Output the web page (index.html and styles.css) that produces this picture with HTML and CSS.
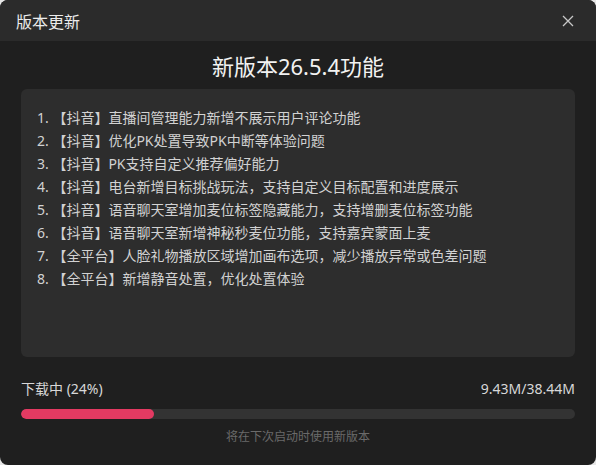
FILE: index.html
```html
<!DOCTYPE html>
<html lang="zh">
<head>
<meta charset="utf-8">
<link rel="stylesheet" href="styles.css">
</head>
<body>
<div class="window">
  <div class="titlebar">
    <span class="title">版本更新</span>
    <svg class="close" width="12" height="12" viewBox="0 0 12 12"><path d="M1 1L11 11M11 1L1 11" stroke="#c8c8c8" stroke-width="1.3" fill="none"/></svg>
  </div>
  <div class="main">
    <h1 class="heading">新版本26.5.4功能</h1>
    <div class="notes">
      <div class="item">1. 【抖音】直播间管理能力新增不展示用户评论功能</div>
      <div class="item">2. 【抖音】优化PK处置导致PK中断等体验问题</div>
      <div class="item">3. 【抖音】PK支持自定义推荐偏好能力</div>
      <div class="item">4. 【抖音】电台新增目标挑战玩法，支持自定义目标配置和进度展示</div>
      <div class="item">5. 【抖音】语音聊天室增加麦位标签隐藏能力，支持增删麦位标签功能</div>
      <div class="item">6. 【抖音】语音聊天室新增神秘秒麦位功能，支持嘉宾蒙面上麦</div>
      <div class="item">7. 【全平台】人脸礼物播放区域增加画布选项，减少播放异常或色差问题</div>
      <div class="item">8. 【全平台】新增静音处置，优化处置体验</div>
    </div>
    <div class="progress-row">
      <span>下载中 (24%)</span>
      <span>9.43M/38.44M</span>
    </div>
    <div class="track"><div class="fill" style="width:24%"></div></div>
    <div class="hint">将在下次启动时使用新版本</div>
  </div>
</div>
</body>
</html>
```
FILE: styles.css
```css
html, body {
  margin: 0;
  padding: 0;
  background: #e6e6e6;
}
.window {
  width: 596px;
  height: 465px;
  border-radius: 8px;
  overflow: hidden;
  background: #1f1f1f;
  font-family: "Noto Sans", "Noto Sans CJK SC", sans-serif;
  color: #d6d6d6;
}
.titlebar {
  height: 41px;
  background: #2b2b2b;
  display: flex;
  align-items: center;
  justify-content: space-between;
  padding: 0 22px 0 16px;
}
.title {
  font-size: 16px;
  color: #ececec;
}
.close {
  display: block;
}
.main {
  padding: 11px 21px 0;
  display: flex;
  flex-direction: column;
}
.heading {
  margin: 0;
  font-size: 22px;
  font-weight: 400;
  line-height: 28px;
  text-align: center;
  color: #f2f2f2;
}
.notes {
  margin-top: 9px;
  height: 268px;
  box-sizing: border-box;
  background: #2d2d2d;
  border-radius: 6px;
  padding: 17px 16px;
}
.item {
  font-size: 14px;
  line-height: 23px;
  color: #d2d2d2;
  white-space: nowrap;
}
.progress-row {
  margin-top: 23px;
  display: flex;
  justify-content: space-between;
  font-size: 14px;
  line-height: 18px;
  color: #d8d8d8;
}
.track {
  margin-top: 11px;
  height: 10px;
  border-radius: 5px;
  background: #333333;
  overflow: hidden;
}
.fill {
  height: 100%;
  border-radius: 5px;
  background: #e33a62;
}
.hint {
  margin-top: 10px;
  font-size: 12px;
  line-height: 16px;
  text-align: center;
  color: #6a6a6a;
}
```
